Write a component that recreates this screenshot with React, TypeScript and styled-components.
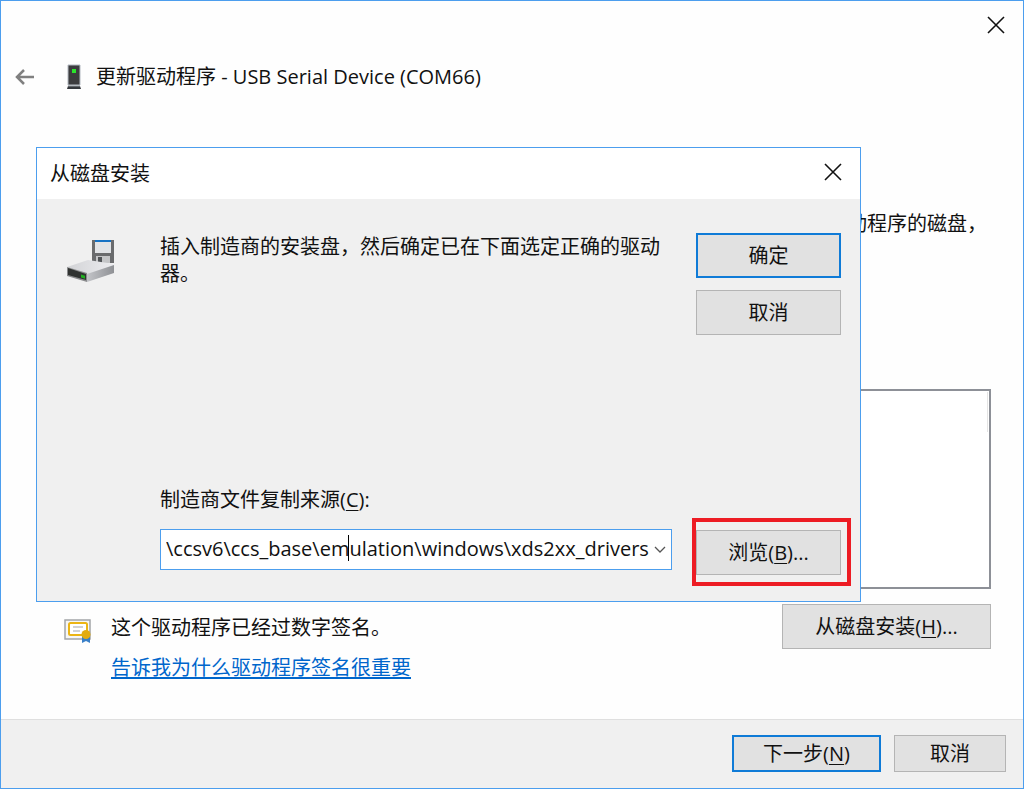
import React from "react";
import styled, { createGlobalStyle, css } from "styled-components";

const Global = createGlobalStyle`
  * { box-sizing: border-box; }
  body { margin: 0; background: #fff; }
  body, button, input {
    font-family: "Open Sans", "Noto Sans CJK SC", sans-serif;
    font-size: 20px;
    line-height: 28px;
    color: #111;
  }
  u { text-underline-offset: 3px; text-decoration-thickness: 1px; }
`;

const Window = styled.main`
  position: relative;
  display: flex;
  flex-direction: column;
  min-height: 100vh;
  border: 1px solid #4c9eee;
  background: #fefefe;
`;

const TitleBar = styled.div`
  display: flex;
  justify-content: flex-end;
  padding: 8px 11px 0 0;
`;

const IconButton = styled.button`
  display: flex;
  align-items: center;
  justify-content: center;
  width: 32px;
  height: 32px;
  padding: 0;
  border: 0;
  background: transparent;
`;

const Header = styled.header`
  display: flex;
  align-items: center;
  height: 72px;
  padding-left: 8px;
`;

const HeaderIcon = styled.span`
  display: flex;
  margin: 0 15px 0 26px;
`;

const Heading = styled.h1`
  margin: 0;
  font-size: 20px;
  font-weight: 400;
`;

const Content = styled.section`
  flex: 1;
  display: flex;
  flex-direction: column;
  padding: 97px 32px 31px 63px;
`;

const Hint = styled.p`
  margin: 0 4px 0 0;
  text-align: right;
`;

const ModelList = styled.div`
  flex: 1;
  min-height: 200px;
  margin: 151px 0 15px;
  padding: 1px;
  border: 2px solid #8d9097;
  background: #fff;
`;

const ListScroll = styled.div`
  height: 40px;
  border-right: 1px solid #e4e4e4;
`;

const SignatureRow = styled.div`
  display: flex;
  align-items: flex-start;
`;

const SignatureIcon = styled.span`
  display: flex;
  padding-top: 14px;
`;

const SignatureText = styled.div`
  flex: 1;
  padding-top: 4px;
  margin-left: 19px;
  p { margin: 0; line-height: 40px; }
`;

const Link = styled.a`
  color: #0066cc;
  text-underline-offset: 2px;
  text-decoration-thickness: 2px;
`;

const Button = styled.button<{ $width: number; $height?: number; $primary?: boolean }>`
  width: ${(p) => p.$width}px;
  height: ${(p) => p.$height ?? 45}px;
  padding: 0;
  background: #e1e1e1;
  border: 1px solid #b4b4b4;
  ${(p) => p.$primary && css`border: 2px solid #0f7bd7;`}
`;

const Footer = styled.footer`
  display: flex;
  justify-content: flex-end;
  gap: 13px;
  padding: 15px 17px 16px 0;
  border-top: 1px solid #dfdfdf;
  background: #f0f0f0;
`;

const Dialog = styled.section`
  position: absolute;
  top: 146px;
  left: 35px;
  right: 162px;
  height: 455px;
  display: flex;
  flex-direction: column;
  border: 1px solid #4c9eee;
  background: #f0f0f0;
`;

const DialogTitle = styled.header`
  display: flex;
  align-items: flex-start;
  justify-content: space-between;
  height: 51px;
  padding: 8px 11px 0 13px;
  line-height: 36px;
  background: #fff;
`;

const DialogBody = styled.div`
  flex: 1;
  display: grid;
  grid-template-columns: 94px minmax(0, 1fr) 164px;
  grid-template-rows: 1fr auto;
  padding: 34px 0 15px 29px;
`;

const DriveIcon = styled.span`
  padding: 7px 0 0 1px;
`;

const Message = styled.p`
  margin: 0;
  padding-right: 18px;
  line-height: 27px;
`;

const DialogActions = styled.div`
  display: flex;
  flex-direction: column;
  gap: 12px;
`;

const Source = styled.div`
  grid-column: 2;
  align-self: end;
  padding-bottom: 16px;
`;

const Label = styled.label`
  display: block;
  margin: 0 0 15px;
`;

const Combo = styled.div`
  position: relative;
  display: flex;
  height: 41px;
  margin-right: 24px;
  border: 1px solid #4c9eee;
  background: #fff;
`;

const PathInput = styled.input`
  flex: 1;
  min-width: 0;
  padding: 0 0 2px 5px;
  border: 0;
  outline: 0;
  background: transparent;
`;

const Caret = styled.span`
  position: absolute;
  top: 5px;
  left: 187px;
  width: 1px;
  height: 26px;
  background: #000;
`;

const DropButton = styled(IconButton)`
  width: 22px;
  height: 40px;
`;

const Highlight = styled.div`
  align-self: end;
  display: flex;
  width: 159px;
  margin-left: -4px;
  padding: 8px 6px 7px 0;
  border: 4px solid #ed1c24;
`;

const Cross = () => (
  <svg width="18" height="18" viewBox="0 0 18 18" stroke="#111" strokeWidth="1.6" fill="none">
    <path d="M1 1 17 17M17 1 1 17" />
  </svg>
);

const BackArrow = () => (
  <svg width="20" height="16" viewBox="0 0 20 16" fill="none" stroke="#808080" strokeWidth="2.5">
    <path d="M19 8H2M9 1 2 8l7 7" />
  </svg>
);

const DeviceIcon = () => (
  <svg width="14" height="26" viewBox="0 0 14 26">
    <path d="M1 1h12v20H1z" fill="#3c3c3e" stroke="#b4bac2" />
    <path d="M1 22h12l1 3H0z" fill="#34373b" />
    <path d="M1 22h12" stroke="#8f969c" />
    <path d="M5 5h4v4H5z" fill="#2be52b" />
  </svg>
);

const FloppyDriveIcon = () => (
  <svg width="48" height="44" viewBox="0 0 48 44">
    <defs>
      <linearGradient id="top" x1="0" x2="1">
        <stop offset="0" stopColor="#d2d3d6" />
        <stop offset="1" stopColor="#ececef" />
      </linearGradient>
      <linearGradient id="side" x1="0" x2="1">
        <stop offset="0" stopColor="#c3c4c8" />
        <stop offset="1" stopColor="#8f9195" />
      </linearGradient>
    </defs>
    <path d="M25 0h22v23H27l-2-2z" fill="#6a6b6d" />
    <path d="M28 1h16v12H28z" fill="#e1e3e6" />
    <path d="M28 0h16v2H28z" fill="#1672c4" />
    <path d="M29 16h14v7H29z" fill="#c4c5c7" />
    <path d="M31 17h4v6h-4z" fill="#505356" />
    <path d="M0 27 21 20 47 24v2L20 35z" fill="url(#top)" />
    <path d="M20 34 47 25v8L20 42z" fill="url(#side)" />
    <path d="M0 27 20 33v9L0 36z" fill="#8a8b8d" />
    <path d="M1 28 19 34v6L1 35z" fill="#303331" />
    <path d="M14 34.500l4 1.200v3l-4-1.200z" fill="#20b020" />
  </svg>
);

const CertificateIcon = () => (
  <svg width="28" height="26" viewBox="0 0 28 26">
    <path d="M1 2h25v19H1z" fill="#f6f6f6" stroke="#a3a5a8" strokeWidth="1.500" />
    <rect x="5" y="5" width="18" height="12" rx="1.500" fill="#fff" stroke="#ecb514" strokeWidth="2" />
    <path d="M9 9h10M9 13h7" stroke="#a3a5a8" />
    <path d="M18 18h8v7l-4-2-4 2z" fill="#3a80c8" />
    <circle cx="22" cy="16.500" r="4.500" fill="#e3ac10" />
  </svg>
);

export default function App() {
  return (
    <>
      <Global />
      <Window>
        <TitleBar>
          <IconButton aria-label="关闭"><Cross /></IconButton>
        </TitleBar>
        <Header>
          <IconButton aria-label="返回"><BackArrow /></IconButton>
          <HeaderIcon><DeviceIcon /></HeaderIcon>
          <Heading>更新驱动程序 - USB Serial Device (COM66)</Heading>
        </Header>
        <Content>
          <Hint>动程序的磁盘，</Hint>
          <ModelList><ListScroll /></ModelList>
          <SignatureRow>
            <SignatureIcon><CertificateIcon /></SignatureIcon>
            <SignatureText>
              <p>这个驱动程序已经过数字签名。</p>
              <p><Link href="#signing">告诉我为什么驱动程序签名很重要</Link></p>
            </SignatureText>
            <Button $width={209}>从磁盘安装(<u>H</u>)...</Button>
          </SignatureRow>
        </Content>
        <Footer>
          <Button $width={149} $height={37} $primary>下一步(<u>N</u>)</Button>
          <Button $width={112} $height={37}>取消</Button>
        </Footer>

        <Dialog role="dialog" aria-labelledby="dialog-title">
          <DialogTitle>
            <span id="dialog-title">从磁盘安装</span>
            <IconButton aria-label="关闭"><Cross /></IconButton>
          </DialogTitle>
          <DialogBody>
            <DriveIcon><FloppyDriveIcon /></DriveIcon>
            <Message>插入制造商的安装盘，然后确定已在下面选定正确的驱动器。</Message>
            <DialogActions>
              <Button $width={145} $primary>确定</Button>
              <Button $width={145}>取消</Button>
            </DialogActions>
            <Source>
              <Label htmlFor="source">制造商文件复制来源(<u>C</u>):</Label>
              <Combo>
                <PathInput id="source" defaultValue="\ccsv6\ccs_base\emulation\windows\xds2xx_drivers" />
                <Caret />
                <DropButton aria-label="展开">
                  <svg width="12" height="8" viewBox="0 0 12 8" fill="none" stroke="#555" strokeWidth="1.300">
                    <path d="M1 1l5 5 5-5" />
                  </svg>
                </DropButton>
              </Combo>
            </Source>
            <Highlight>
              <Button $width={145}>浏览(<u>B</u>)...</Button>
            </Highlight>
          </DialogBody>
        </Dialog>
      </Window>
    </>
  );
}
